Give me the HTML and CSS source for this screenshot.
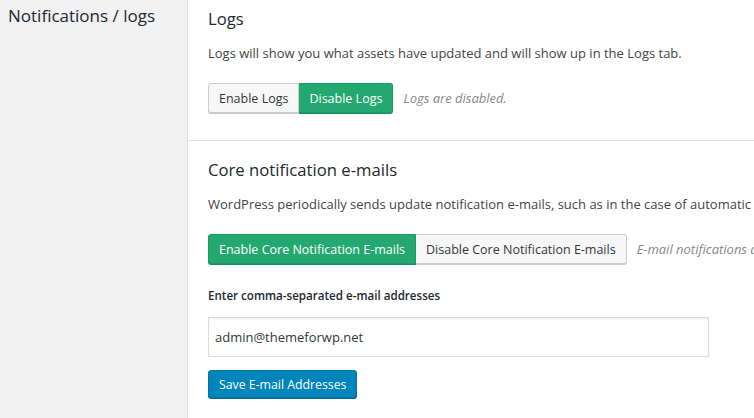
FILE: index.html
```html
<!DOCTYPE html>
<html>
<head>
<meta charset="utf-8">
<link rel="stylesheet" href="styles.css">
</head>
<body>
<div class="page">
  <aside class="side">
    <h2 class="side-title">Notifications / logs</h2>
  </aside>
  <main class="content">
    <section class="block block-logs">
      <h3 class="title">Logs</h3>
      <p class="desc">Logs will show you what assets have updated and will show up in the Logs tab.</p>
      <div class="row">
        <div class="group">
          <button class="btn">Enable Logs</button>
          <button class="btn btn-green">Disable Logs</button>
        </div>
        <span class="note">Logs are disabled.</span>
      </div>
    </section>
    <section class="block block-core">
      <h3 class="title">Core notification e-mails</h3>
      <p class="desc">WordPress periodically sends update notification e-mails, such as in the case of automatic updates.</p>
      <div class="row">
        <div class="group">
          <button class="btn btn-green">Enable Core Notification E-mails</button>
          <button class="btn">Disable Core Notification E-mails</button>
        </div>
        <span class="note">E-mail notifications are enabled.</span>
      </div>
      <label class="label">Enter comma-separated e-mail addresses</label>
      <input class="input" type="text" value="admin@themeforwp.net">
      <div><button class="btn-blue">Save E-mail Addresses</button></div>
    </section>
  </main>
</div>
</body>
</html>
```
FILE: styles.css
```css
* { box-sizing: border-box; }
html, body { margin: 0; padding: 0; background: #fff; }
body {
  font-family: "Open Sans", "Noto Sans", sans-serif;
  font-size: 13px;
  color: #3c434a;
  overflow: hidden;
  width: 754px;
  height: 418px;
}
.page { display: flex; height: 418px; }
.side {
  width: 188px;
  flex: none;
  background: #f1f1f1;
  border-right: 1px solid #e2e2e2;
  padding: 5px 0 0 8px;
}
.side-title {
  margin: 0;
  font-size: 17px;
  font-weight: 400;
  color: #23282d;
  line-height: 22px;
}
.content { flex: 1; min-width: 0; white-space: nowrap; overflow: hidden; }
.block { padding: 0 0 0 20px; }
.block-logs { padding-top: 8px; height: 141px; border-bottom: 1px solid #e5e5e5; }
.title { margin: 0; font-size: 16.7px; font-weight: 400; color: #23282d; line-height: 22px; }
.block-core { padding-top: 18px; }
.desc { margin: 14px 0 0; line-height: 18px; color: #444; }
.row { display: flex; align-items: center; margin-top: 21px; }
.group { display: flex; }
.btn {
  height: 30px;
  padding: 0 10px;
  font: inherit;
  font-size: 12.5px;
  color: #32373c;
  background: #f7f7f7;
  border: 1px solid #ccc;
  box-shadow: 0 1px 0 #ccc;
  cursor: pointer;
}
.group .btn:first-child { border-radius: 3px 0 0 3px; }
.group .btn:last-child { border-radius: 0 3px 3px 0; border-left: 0; }
.btn-green { background: #23a870; border-color: #1e9a66; color: #fff; box-shadow: 0 1px 0 #1b8c5c; }
.note { margin-left: 10px; font-style: italic; color: #888; }
.label { display: block; margin-top: 23px; font-size: 11.6px; font-weight: 600; color: #23282d; line-height: 18px; }
.input {
  display: block;
  width: 501px;
  height: 40px;
  margin-top: 12px;
  padding: 0 6px;
  font: inherit;
  color: #32373c;
  border: 1px solid #ddd;
  box-shadow: inset 0 1px 2px rgba(0,0,0,0.07);
}
.btn-blue {
  margin-top: 13px;
  height: 28px;
  padding: 0 10px;
  font: inherit;
  font-size: 12.3px;
  color: #fff;
  background: #0085ba;
  border: 1px solid #0073aa;
  border-radius: 3px;
  box-shadow: 0 1px 0 #006799;
}
```
